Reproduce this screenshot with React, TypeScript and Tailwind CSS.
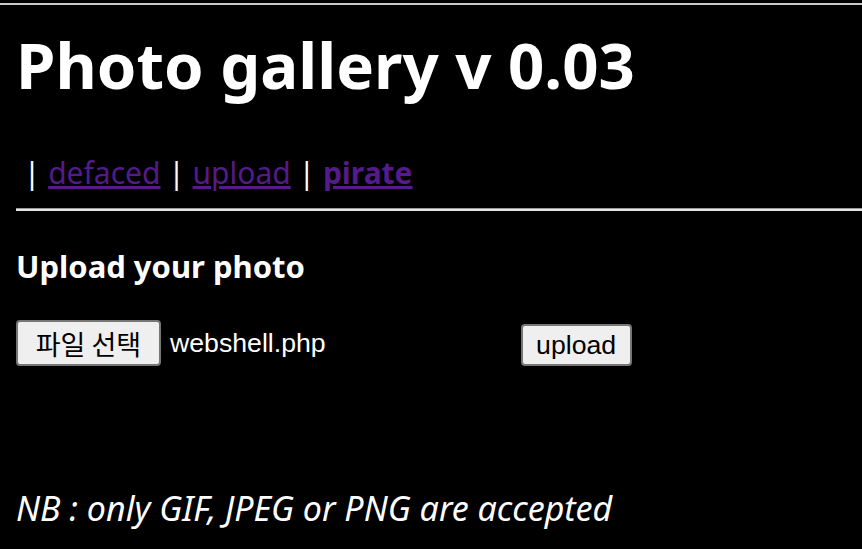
import React from "react";

export default function App() {
  const sans = { fontFamily: '"Noto Sans", "Open Sans", sans-serif' };
  return (
    <div className="min-h-[549px] w-full bg-black text-white overflow-hidden" style={sans}>
      <div className="pt-[3px]">
        <div className="h-[2px] bg-[#c8c8c8]" />
      </div>
      <div className="pl-[16px]">
        <div className="mt-[28px] text-[63.5px] leading-[64px] font-bold whitespace-nowrap">Photo gallery v 0.03</div>
        <div className="mt-[61px] text-[30px] leading-[30px] whitespace-nowrap">
          <span className="text-white">&nbsp;| </span>
          <a href="#" className="text-[#551a8b] underline">defaced</a>
          <span className="text-white"> | </span>
          <a href="#" className="text-[#551a8b] underline">upload</a>
          <span className="text-white"> | </span>
          <a href="#" className="text-[#551a8b] underline font-bold">pirate</a>
        </div>
        <div className="mt-[20px]">
          <div className="h-[1px] bg-[#9a9a9a]" />
          <div className="h-[2px] bg-[#e6e6e6]" />
        </div>
        <div className="mt-[40px] text-[31px] leading-[31px] font-bold whitespace-nowrap">Upload your photo</div>
        <div className="mt-[38px] flex items-end whitespace-nowrap" style={{ fontFamily: '"Liberation Sans", "Noto Sans CJK KR", sans-serif' }}>
          <div className="flex items-center">
            <button className="h-[46px] w-[145px] rounded-[4px] border-2 border-[#767676] bg-[#efefef] text-black text-[27px] leading-[27px] flex items-center justify-center" style={{ fontFamily: '"Noto Sans CJK KR", sans-serif' }}>
              파일 선택
            </button>
            <span className="ml-[9px] text-[26.67px] text-white">webshell.php</span>
          </div>
          <button className="ml-[195px] h-[42px] w-[111px] rounded-[4px] border-2 border-[#767676] bg-[#efefef] text-black text-[26.67px] flex items-center justify-center">
            upload
          </button>
        </div>
        <div className="mt-[125px] text-[34px] leading-[34px] italic whitespace-nowrap">NB : only GIF, JPEG or PNG are accepted</div>
      </div>
    </div>
  );
}
